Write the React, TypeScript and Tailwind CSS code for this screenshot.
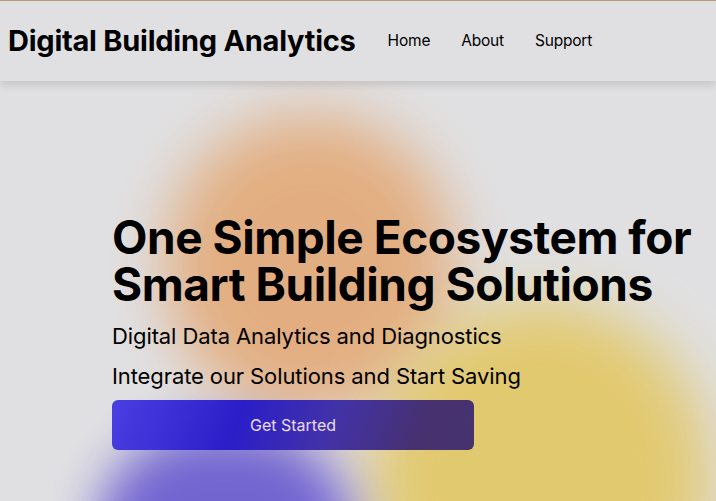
import React from "react";

const App = () => {
  return (
    <div className="relative min-h-screen h-[501px] overflow-hidden bg-[#e0e0e2] font-['Inter',sans-serif] text-black">
      {/* blurred colour blobs */}
      <div className="absolute left-[165px] top-[115px] h-[300px] w-[290px] rounded-full bg-[#e3a977] opacity-90 blur-[30px]"></div>
      <div className="absolute left-[370px] top-[300px] h-[360px] w-[340px] rounded-full bg-[#e2c86a] opacity-95 blur-[30px]"></div>
      <div className="absolute left-[95px] top-[430px] h-[220px] w-[260px] rounded-full bg-[#6d5fd0] opacity-95 blur-[25px]"></div>

      {/* Header */}
      <header className="relative z-10 h-[81px] border-t border-[#b99c6b] bg-[#e0e0e2] shadow-[0_4px_8px_rgba(0,0,0,0.12)]">
        <div className="flex h-full items-center px-2">
          <a href="/" className="text-[29px] font-bold tracking-[-0.25px]">
            Digital Building Analytics
          </a>
          <nav className="ml-[32px] flex gap-[31px] text-[15.5px] tracking-[-0.2px]">
            <a href="#home">Home</a>
            <a href="#about">About</a>
            <a href="#support">Support</a>
          </nav>
        </div>
      </header>

      {/* Hero */}
      <section className="relative z-10 pl-[112px] pt-[133px]">
        <h1 className="text-[46px] font-bold leading-[47px] tracking-[-0.45px]">
          One Simple Ecosystem for
          <br />
          Smart Building Solutions
        </h1>
        <p className="mt-[14px] text-[22px] leading-[28px] tracking-[-0.1px]">Digital Data Analytics and Diagnostics</p>
        <p className="mt-[12px] text-[22px] leading-[28px] tracking-[-0.1px]">Integrate our Solutions and Start Saving</p>
        <button className="mt-[10px] h-[50px] w-[362px] rounded-md bg-[linear-gradient(110deg,#4a3fe2_0%,#2b1ec8_35%,#4232a8_60%,#47316f_85%,#46336e_100%)] text-base text-[#eadcf0]">
          Get Started
        </button>
      </section>
    </div>
  );
};

export default App;
